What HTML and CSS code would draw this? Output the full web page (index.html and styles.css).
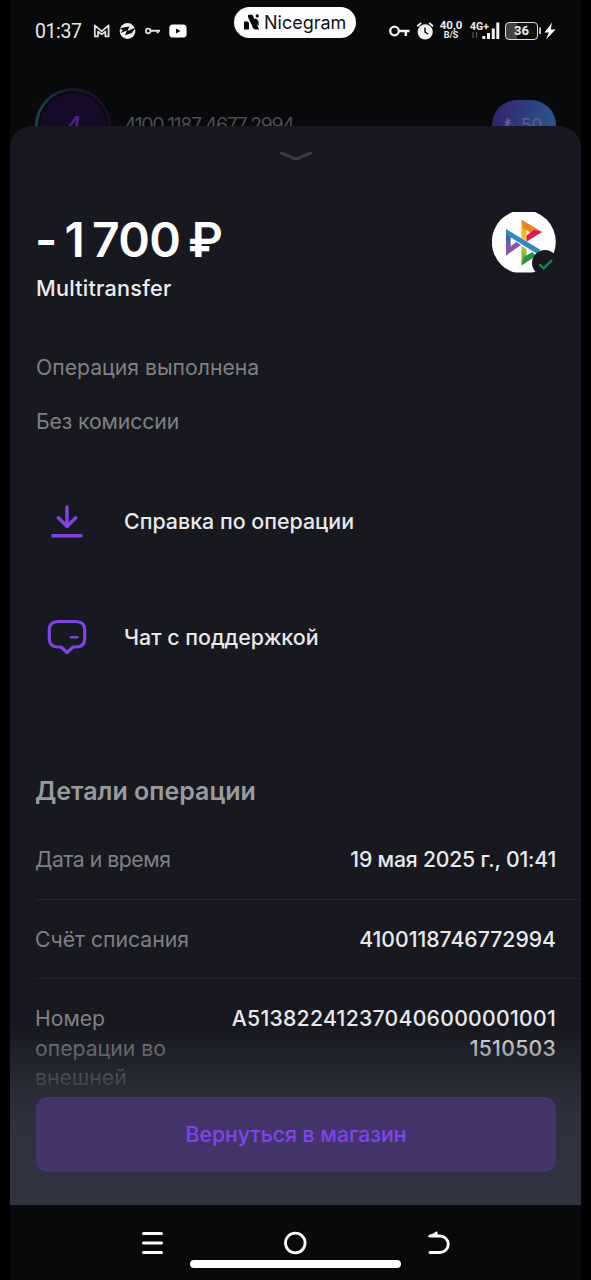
FILE: index.html
```html
<!DOCTYPE html>
<html lang="ru">
<head>
<meta charset="utf-8">
<title>Операция</title>
<link rel="stylesheet" href="styles.css">
</head>
<body>
<div class="screen">
  <div class="status">
    <span class="clock">01:37</span>
    <svg class="left-icons" width="75" height="20" viewBox="92 21 75 20" fill="none" stroke="#e4e4e4">
      <path d="M94.8 36.3V25.4L101.7 31.3L108.6 25.4V36.3H105.4V31.6L101.7 34.4L98 31.6V36.3Z" stroke-width="1.7" stroke-linejoin="round"/>
      <circle cx="127.5" cy="31" r="7.9" fill="#eee" stroke="none"/>
      <path d="M119.5 29L123 27.6L129.4 26.6L127.6 31L135.6 27.4L131.8 33L125 35.2L127 30.6L120.5 33L123 30Z" fill="#08090b" stroke="none"/>
      <circle cx="148.2" cy="31" r="2.3" stroke-width="1.7"/>
      <path d="M150.5 30.8H160M157.7 31V33.2" stroke-width="2"/>
    </svg>
    <svg class="video" width="18" height="14" viewBox="0 0 18 14"><rect width="17.3" height="13" x=".3" y=".5" rx="3.5" fill="#fff"/><path d="M7 4.6V9.4L11.5 7Z" fill="#08090b"/></svg>
    <svg class="right-a" width="45" height="22" viewBox="388 20 45 22" fill="none" stroke="#f2f2f2">
      <circle cx="394.5" cy="31" r="4.3" stroke-width="2.3"/>
      <path d="M399 31H409.5M405.8 31V36" stroke-width="2.6"/>
      <circle cx="425.2" cy="31.8" r="7.6" fill="#f5f5f5" stroke="none"/>
      <path d="M417.2 26.2L421.2 22.9M433 26.2L429.2 22.9" stroke-width="1.8"/>
      <path d="M425 27.5V32.2L428.2 34" stroke="#08090b" stroke-width="1.4"/>
    </svg>
    <div class="speed"><span>40,0</span><span>B/S</span></div>
    <div class="signal">
      <span class="net">4G+</span>
      <svg width="30" height="20" viewBox="471 21 30 20"><path d="M474 32V38M477.5 32V38" stroke="#555" stroke-width="1.2"/><path d="M484.8 36V39M489.5 33V39M494.3 28.5V39M498.8 22.5V39" stroke="#f2f2f2" stroke-width="3"/></svg>
    </div>
    <div class="battery"><span>36</span></div>
    <svg class="bolt" width="17" height="20" viewBox="539 21 17 20"><path d="M540 27.5V34" stroke="#ddd" stroke-width="1.7"/><path d="M552 22.5L544.5 32.4H549L546 39.4L555.6 29.4H550.8Z" fill="#fff"/></svg>
  </div>
  <div class="pill">
    <svg width="16" height="17" viewBox="0 0 16 17"><path d="M0 7.5H3.2Q5 7.5 5 9.5V15.5H0ZM4.2 .8H8.4L15.2 15.5H11.5Q9.6 15.5 8.8 13.5L4 3Z" fill="#08090b"/><path d="M9.6 5.6L11.8 4.6Q13.4 5 14.4 7.5L15 12L12.5 10Z" fill="#08090b"/><circle cx="13.2" cy="1.9" r="1.6" fill="#08090b"/></svg>
    <span>Nicegram</span>
  </div>
  <div class="wallet">
    <div class="avatar"><span>4</span></div>
    <span class="account">4100 1187 4677 2994</span>
    <div class="bonus"><span>₺</span><span>50</span></div>
  </div>
  <main class="sheet">
    <svg class="handle" width="34" height="10" viewBox="0 0 34 10"><path d="M2 2L17 8.2L32 2" fill="none" stroke="#393a43" stroke-width="3" stroke-linecap="round" stroke-linejoin="round"/></svg>
    <div class="summary">
      <div>
        <h1>- 1 700 ₽</h1>
        <p class="merchant">Multitransfer</p>
      </div>
      <svg class="logo" width="66" height="64" viewBox="490 210 66 64">
        <defs>
          <clipPath id="disc"><rect x="492" y="212" width="64" height="60.5"/></clipPath>
          <linearGradient id="violet" x1="0" y1="0" x2="0" y2="1"><stop offset="0" stop-color="#275daa"/><stop offset="1" stop-color="#a55bb4"/></linearGradient>
          <linearGradient id="gold" x1="0" y1="0" x2="0" y2="1"><stop offset="0" stop-color="#ef8a20"/><stop offset="1" stop-color="#f6ce25"/></linearGradient>
          <linearGradient id="lime" x1="0" y1="0" x2="0" y2="1"><stop offset="0" stop-color="#b5c832"/><stop offset="1" stop-color="#46a637"/></linearGradient>
        </defs>
        <circle cx="523.8" cy="242" r="32" fill="#fff" clip-path="url(#disc)"/>
        <path d="M506 229L510.7 233V249L506 255.5Z" fill="url(#violet)"/>
        <path d="M506 255.5L521 245L516.4 242L508 248Z" fill="#8a52a9"/>
        <path d="M521.5 219.5L526.5 226V241L521.5 237.8Z" fill="url(#gold)"/>
        <path d="M521.5 219.5L542 232L534 235L524 228.5Z" fill="#ed8226"/>
        <path d="M542 232L526.5 241.8V235.5L534.5 229.5Z" fill="#d81f4c"/>
        <path d="M521.5 246L526.5 249V259L521.5 265.5Z" fill="url(#lime)"/>
        <path d="M521.5 265.5L536 256L532.3 252L524 257Z" fill="#279245"/>
        <path d="M506 229L540 249.5L539 255L506 234.6Z" fill="#3488bd"/>
        <circle cx="545" cy="263" r="13" fill="#181920"/>
        <path d="M539.3 264.3L543.8 268.3L552 260" fill="none" stroke="#18875c" stroke-width="2.4"/>
      </svg>
    </div>
    <p class="note note-done">Операция выполнена</p>
    <p class="note note-fee">Без комиссии</p>
    <div class="action">
      <svg width="40" height="40" viewBox="47 501 40 40" fill="none" stroke="#8043e6" stroke-width="3.4" stroke-linecap="round" stroke-linejoin="round"><path d="M67 507V526M58.3 517.7L67 526.5L75.7 517.7M52.7 535.8H81"/></svg>
      <span class="receipt">Справка по операции</span>
    </div>
    <div class="action">
      <svg width="40" height="40" viewBox="47 617 40 40" fill="none" stroke="#8043e6" stroke-width="3.2" stroke-linejoin="round"><path d="M58 621.5H76Q84.7 621.5 84.7 630V638.5Q84.7 647 76 647H73L67 652.5L61 647H58Q49.3 647 49.3 638.5V630Q49.3 621.5 58 621.5Z"/><path d="M71 637.3H77.2" stroke-width="2.6" stroke-linecap="round"/></svg>
      <span class="support">Чат с поддержкой</span>
    </div>
    <h2>Детали операции</h2>
    <div class="row"><span class="label date-label">Дата и время</span><span class="value date">19 мая 2025 г., 01:41</span></div>
    <div class="row"><span class="label from-label">Счёт списания</span><span class="value from">4100118746772994</span></div>
    <div class="row row-last"><span class="label num-label">Номер<br>операции во<br>внешней</span><span class="value num">A513822412370406000001001<br><span class="tail">1510503</span></span></div>
    <div class="footer"><button>Вернуться в магазин</button></div>
  </main>
  <nav class="nav">
    <svg width="300" height="40" viewBox="140 1225 300 40" fill="none" stroke="#fafafa" stroke-linecap="round"><path d="M143.5 1233.5H161.5M143.5 1243H161.5M143.5 1252.5H161.5" stroke-width="3"/><circle cx="295.3" cy="1243" r="9.8" stroke-width="2.8"/></svg>
    <svg class="back" width="26" height="28" viewBox="425 1229 26 28"><path d="M430 1236H440A8.2 8.2 0 0 1 440 1252.5H430" fill="none" stroke="#fafafa" stroke-width="2.9" stroke-linecap="round"/><path d="M428.5 1236.5L437 1231.8V1236Z" fill="#fafafa" stroke="#fafafa"/></svg>
    <div class="home-bar"></div>
  </nav>
</div>
</body>
</html>
```
FILE: styles.css
```css
* { box-sizing: border-box; margin: 0; padding: 0; }
body { background: #000; font-family: Inter, "Noto Sans", sans-serif; font-size: 21.2px; line-height: 30px; color: #e8e8eb; }
.screen { position: relative; width: 571px; height: 1280px; margin-left: 10px; background: #08090b; overflow: hidden; display: flex; flex-direction: column; }
span, h1, h2, p { white-space: nowrap; }

.status { height: 88px; padding-top: 20px; display: flex; align-items: flex-start; }
.clock { width: 57px; padding-left: 25px; font: 400 19.5px/23px Roboto, sans-serif; letter-spacing: -.4px; color: #e8e8e8; flex: none; }
.left-icons { flex: none; margin: 1px 0 0 25px; }
.video { flex: none; margin: 4px 0 0 2px; }
.right-a { flex: none; margin-left: 201px; overflow: visible; }
.speed { width: 28px; margin-left: 4px; display: flex; flex-direction: column; align-items: center; font: 700 11.5px/10px Roboto, sans-serif; color: #eee; }
.speed span + span { font-size: 9px; }
.signal { width: 31px; height: 22px; margin-left: 5px; display: grid; }
.signal > * { grid-area: 1 / 1; }
.signal svg { margin-top: 1px; }
.net { font: 700 10.5px/13px Roboto, sans-serif; color: #eee; }
.battery { width: 33px; height: 18px; margin: 2px 0 0 4px; border: 1.5px solid #ddd; border-radius: 4px; background: linear-gradient(90deg, #444 34%, #111 34%); font: 700 13px/15.5px Roboto, sans-serif; text-align: center; color: #eee; flex: none; }
.bolt { flex: none; margin: 1px 0 0 1px; }

.pill { position: absolute; left: 224px; top: 7px; width: 122px; height: 31px; border-radius: 16px; background: #fff; color: #111; display: flex; align-items: center; padding-left: 10px; gap: 4px; font-size: 18px; }

.wallet { height: 38px; overflow: hidden; padding: 0 25px; display: flex; color: #4c4d51; }
.avatar { flex: none; width: 76px; height: 76px; border-radius: 50%; padding: 3px; background: linear-gradient(90deg, #174a4a, #1d1237 45%, #180d29); }
.avatar span { display: block; height: 70px; border: 2px solid #08090b; border-radius: 50%; background: #160a26; color: #4f2296; font: italic 500 25px/66px Inter, sans-serif; text-align: center; }
.account { margin: 22px 0 0 13px; font-size: 19.5px; letter-spacing: -1.4px; }
.bonus { width: 64px; height: 50px; margin: 12px 0 0 auto; border-radius: 25px; background: linear-gradient(100deg, #33216f, #29598c); display: flex; gap: 7px; padding: 10px 0 0 12px; font-size: 17px; color: #615f94; }

.sheet { position: relative; flex: none; height: 1079px; padding-left: 26px; border-radius: 22px 22px 0 0; background: #181920; overflow: hidden; }
.handle { display: block; margin: 25px 0 0 243px; }
.summary { display: flex; justify-content: space-between; padding: 49px 25px 0 0; height: 142px; }
h1 { font-size: 48px; line-height: 56px; font-weight: 600; color: #fff; margin-top: 2px; margin-left: -1px; letter-spacing: -.7px; word-spacing: -3.5px; }
.merchant { margin-top: 5px; font-size: 21.6px; font-weight: 500; color: #ececef; letter-spacing: .25px; }
.note { color: #7f8085; }
.note-done { margin-top: 49px; }
.note-fee { margin-top: 24px; margin-bottom: 65px; letter-spacing: -.1px; }
.action { display: flex; align-items: center; gap: 37px; height: 40px; padding-left: 11px; margin-bottom: 76px; font-size: 21.4px; font-weight: 500; }
h2 { margin: 119px 0 0; margin-left: -1px; font-size: 25px; line-height: 30px; font-weight: 600; color: #9a9a9e; }
.row { display: flex; justify-content: space-between; padding: 38px 25px 25px 0; height: 94px; border-bottom: 1px solid #24252e; color: #7f8085; }
.row + .row { height: 79px; padding-top: 24px; }
.row + .row-last { height: auto; border: 0; padding-top: 25px; line-height: 29.6px; }
.label { margin-left: -1px; }
.date-label { letter-spacing: -.45px; }
.value { font-weight: 500; color: #e9e9ec; text-align: right; }
.date { letter-spacing: -.2px; }
.num { letter-spacing: .27px; }

.footer { position: absolute; left: 0; right: 0; bottom: 0; height: 178px; padding: 70px 26px 33px; background: linear-gradient(#18192000, #2c2f3ab0 52px, #2d303c 82px, #31323f 120px); }
button { display: block; width: 520px; height: 75px; border: 0; border-radius: 12px; background: #44346a; color: #8044ed; font: 500 21.2px/75px Inter, sans-serif; text-align: center; }

.nav { position: relative; height: 75px; flex: none; display: flex; align-items: flex-start; padding: 20px 0 0 130px; }
.back { margin: 4px 0 0 -15px; flex: none; }
.nav > svg:first-child { flex: none; }
.home-bar { position: absolute; left: 180px; top: 55px; width: 211px; height: 8px; border-radius: 4px; background: #fff; }
```
